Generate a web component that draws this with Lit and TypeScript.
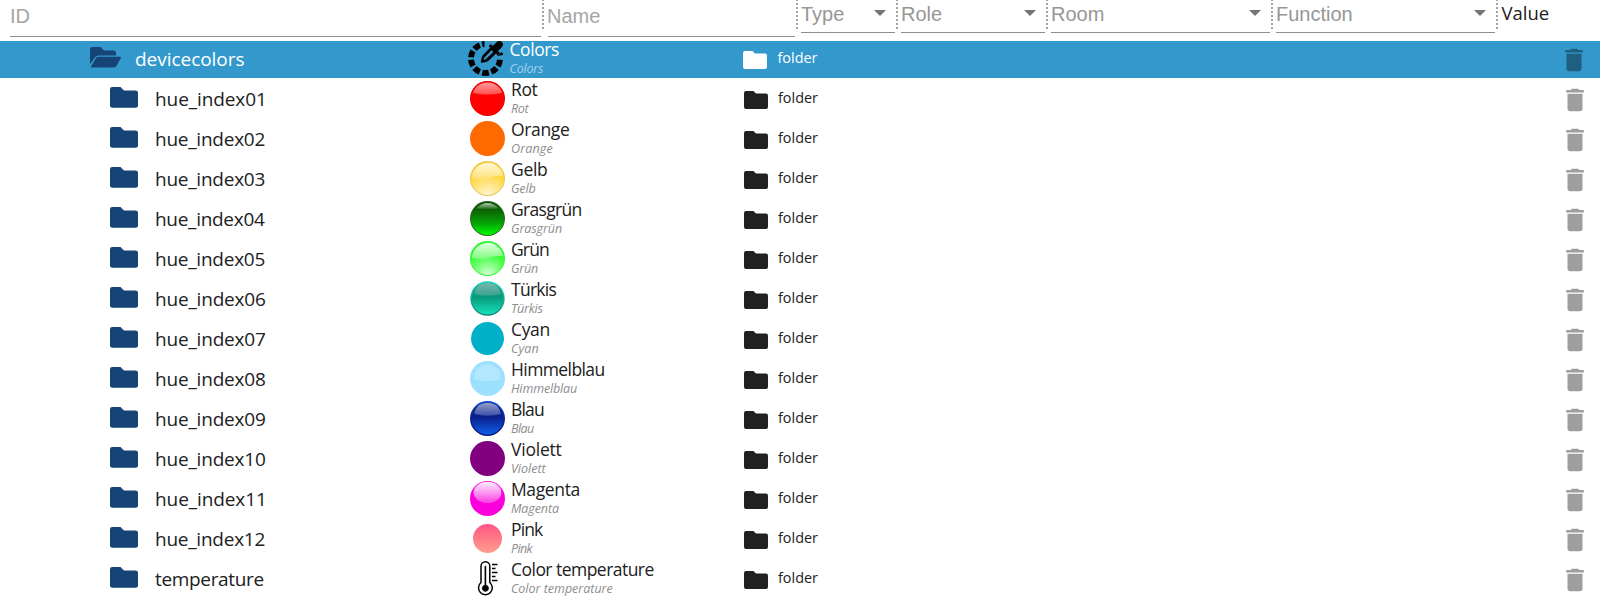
import { LitElement, html, css, svg } from "lit";
import { customElement } from "lit/decorators.js";
import { styleMap } from "lit/directives/style-map.js";
import { classMap } from "lit/directives/class-map.js";

interface Row {
  id: string;
  idWidth: number;
  name: string;
  nameWidth: number;
  subWidth: number;
  icon: string;
  open?: boolean;
}

const ROWS: Row[] = [
  { id: "devicecolors", idWidth: 108.5, name: "Colors", nameWidth: 48.5, subWidth: 34.5, icon: "picker", open: true },
  { id: "hue_index01", idWidth: 107, name: "Rot", nameWidth: 25.5, subWidth: 18.5, icon: "rot" },
  { id: "hue_index02", idWidth: 108.5, name: "Orange", nameWidth: 57, subWidth: 41.5, icon: "orange" },
  { id: "hue_index03", idWidth: 108.5, name: "Gelb", nameWidth: 35, subWidth: 24.5, icon: "gelb" },
  { id: "hue_index04", idWidth: 109, name: "Grasgrün", nameWidth: 69.5, subWidth: 51, icon: "gras" },
  { id: "hue_index05", idWidth: 108.5, name: "Grün", nameWidth: 37, subWidth: 27, icon: "gruen" },
  { id: "hue_index06", idWidth: 109, name: "Türkis", nameWidth: 45.5, subWidth: 31.5, icon: "tuerkis" },
  { id: "hue_index07", idWidth: 109, name: "Cyan", nameWidth: 37.5, subWidth: 27.5, icon: "cyan" },
  { id: "hue_index08", idWidth: 109, name: "Himmelblau", nameWidth: 92.5, subWidth: 66, icon: "himmel" },
  { id: "hue_index09", idWidth: 109, name: "Blau", nameWidth: 32, subWidth: 23, icon: "blau" },
  { id: "hue_index10", idWidth: 109, name: "Violett", nameWidth: 50.5, subWidth: 34.5, icon: "violett" },
  { id: "hue_index11", idWidth: 107, name: "Magenta", nameWidth: 67.5, subWidth: 48, icon: "magenta" },
  { id: "hue_index12", idWidth: 108.5, name: "Pink", nameWidth: 32, subWidth: 22.5, icon: "pink" },
  { id: "temperature", idWidth: 108.5, name: "Color temperature", nameWidth: 141.5, subWidth: 101.5, icon: "thermo" },
];

const pen = document.createElement("canvas").getContext("2d")!;

// Letter spacing that makes a label span the given width.
function tracking(text: string, font: string, width: number) {
  pen.font = font;
  const m = pen.measureText(text);
  const ink = m.actualBoundingBoxRight + m.actualBoundingBoxLeft;
  return { letterSpacing: `${((width - ink) / (text.length - 1)).toFixed(3)}px` };
}

const grad = (id: string, stops: [number, string][]) => svg`
  <linearGradient id=${id} x1="0" y1="0" x2="0" y2="1">
    ${stops.map(([o, c]) => svg`<stop offset=${o} stop-color=${c}></stop>`)}
  </linearGradient>`;

const disc = (fill: string, r = 17.5) => svg`<circle cx="17.5" cy="17.5" r=${r} fill=${fill}></circle>`;

const WAVE = "M2 17A15.6 15.6 0 0 1 33 15Q26 13.8 20 16.5T2 17Z";
const DOME = "M4.2 13C5.5 5 11 1.8 17.5 1.8S29.5 5 30.8 13Q17.5 16.5 4.2 13Z";

const ICONS: Record<string, unknown> = {
  picker: svg`
    ${[18, 54, 90, 126, 162, 198, 234].map(
      (a) => svg`<path transform="rotate(${a} 17.5 17.5)" d="M28.8 14.9L34.5 13.5A17.5 17.5 0 0 1 34.5 21.5L28.8 20.1A11.6 11.6 0 0 0 28.8 14.9Z"></path>`
    )}
    <path d="M13.5 .5Q15 0 16.5 0V6Q15.800 6 14.900 6.200ZM35 14V12.500L33.500 11L29 15Z"></path>
    <path d="M33.900 1.100C32.300-.5 29.900-.3 28.300 1.400L24.900 4.900L22.800 3L20.600 5.200L22.200 6.800L15 14Q13.600 15.400 13.500 17.200L12.800 21.800L17.400 21.200Q19.400 21 20.800 19.600L28 12.600L29.700 14.200L31.900 12L30 10L33.600 6.500C35.300 4.900 35.400 2.600 33.900 1.100ZM18.600 17.600Q17.400 18.700 15.500 19Q15.700 17.300 16.900 16L23.600 9.300L25.300 11Z"></path>`,
  rot: svg`
    ${grad("rotG", [[0, "#ff9b9b"], [1, "#ff5050"]])}
    ${disc("#e00000")}${disc("#ff0000", 16.8)}
    <path fill="url(#rotG)" d="M3 12C5 5 11 1.5 17.5 1.5S30 5 32 12Q17.5 15 3 12Z"></path>`,
  orange: disc("#ff6a00"),
  gelb: svg`
    <radialGradient id="gelbR" cx=".5" cy="1" r=".8"><stop offset="0" stop-color="#fff6cf"></stop><stop offset=".45" stop-color="#ffe587"></stop><stop offset="1" stop-color="#ffd21f"></stop></radialGradient>
    ${grad("gelbG", [[0, "#fff8dc"], [1, "#ffe278"]])}
    ${disc("#e6c65c")}${disc("url(#gelbR)", 16.6)}<path fill="url(#gelbG)" d=${WAVE}></path>`,
  gras: svg`
    ${grad("grasG", [[0, "#0c4a06"], [0.3, "#0b6a05"], [0.65, "#04a504"], [1, "#00f800"]])}
    ${grad("grasH", [[0, "#b5c8b3"], [1, "#176a10"]])}
    ${disc("#27681f")}${disc("url(#grasG)", 16.6)}
    <path fill="url(#grasH)" d="M6 7.5Q17.5-3.5 29 7.5Q17.5 9 6 7.5Z"></path>`,
  gruen: svg`
    <radialGradient id="gruenR" cx=".5" cy="1" r=".8"><stop offset="0" stop-color="#d8ffd8"></stop><stop offset=".45" stop-color="#7dff7d"></stop><stop offset="1" stop-color="#1dff1d"></stop></radialGradient>
    ${grad("gruenG", [[0, "#e2ffe2"], [1, "#80fb80"]])}
    ${disc("#38f038")}${disc("url(#gruenR)", 16.6)}<path fill="url(#gruenG)" d=${WAVE}></path>`,
  tuerkis: svg`
    ${grad("tkG", [[0, "#10a890"], [0.45, "#089a7c"], [1, "#18e0b8"]])}
    ${grad("tkE", [[0, "#10d8b8"], [1, "#128878"]])}
    ${grad("tkH", [[0, "#74b8ac"], [1, "#3aa28c"]])}
    ${disc("url(#tkE)", 17.2)}${disc("url(#tkG)", 15.8)}<path fill="url(#tkH)" d=${DOME}></path>`,
  cyan: disc("#00b0c8", 16.5),
  himmel: svg`${disc("#9be1ff")}
    <path fill="#b2e8ff" d="M4.2 18C3.5 9 9.5 3.6 17.5 3.6S31.5 9 30.8 18Q17.5 22.5 4.2 18Z"></path>`,
  blau: svg`
    ${grad("blG", [[0, "#0a1e80"], [0.45, "#0a1f8c"], [1, "#0f5ee8"]])}
    ${grad("blE", [[0, "#1050d8"], [0.5, "#0a2490"], [1, "#0a1c80"]])}
    ${grad("blH", [[0, "#939fc8"], [1, "#3c4fa6"]])}
    ${disc("url(#blE)")}${disc("url(#blG)", 16)}<path fill="url(#blH)" d=${DOME}></path>`,
  violett: disc("#800080"),
  magenta: svg`
    ${grad("mgG", [[0, "#fff0fe"], [1, "#f93fe2"]])}
    ${disc("#fa00dc")}<ellipse cx="17.5" cy="11.4" rx="13.9" ry="10.6" fill="url(#mgG)"></ellipse>`,
  pink: svg`${grad("pkG", [[0, "#ff5585"], [1, "#ff9e8c"]])}${disc("url(#pkG)", 14.5)}`,
  thermo: svg`
    <g fill="none" stroke="#000" stroke-width="1.5">
      <path d="M11 21.5V5.2a4.4 4.4 0 0 1 8.8 0V21.5a6.9 6.9 0 1 1-8.8 0Z"></path>
      <path d="M22 3.5h5.500M22 7.500h3.5M22 11.500h5.500M22 15.500h3.5M22 19.500h5.500"></path>
    </g>
    <path d="M14.8 24V5.500a.6.6 0 0 1 1.200 0V24a3.3 3.3 0 1 1-1.200 0Z" stroke="#000" stroke-width=".4"></path>`,
};

@customElement("app-root")
class AppRoot extends LitElement {
  static styles = css`
    :host { display: block; height: 601px; overflow: hidden; background: #fff; color: #212121; font-family: "Open Sans", "Noto Sans", sans-serif; }
    svg { display: block; }
    .head { display: flex; height: 41px; padding-left: 10px; font: 20px/24px "Liberation Sans", Arial, sans-serif; color: #969696; }
    .cell { box-sizing: border-box; border-bottom: 1px solid #8f8f8f; display: flex; justify-content: space-between; }
    .input { height: 37px; padding-top: 4px; color: #a5a5a5; }
    .select { height: 33px; padding: 2px 9px 0 0; }
    .arrow { width: 12px; height: 6px; margin-top: 8px; fill: #757575; }
    .dots { width: 2px; height: 29px; background: repeating-linear-gradient(to top, #a3a3a3 0 2px, transparent 2px 4px); }
    .w-id { width: 531px; margin-right: 1px; }
    .w-name { width: 247px; margin: 0 1px 0 4px; text-indent: -1px; }
    .w-type { width: 94px; margin: 0 1px 0 3px; }
    .w-role { width: 144px; margin: 0 1px 0 3px; }
    .w-room { width: 219px; margin: 0 1px 0 3px; }
    .w-func { width: 219px; margin: 0 1px 0 3px; }
    .value { padding-left: 3.5px; font: 18.5px/26px "Open Sans", "Noto Sans", sans-serif; color: #212121; }
    .list { display: flex; flex-direction: column; gap: 3px; }
    .row { display: grid; grid-template-columns: 110px 45px 315px 41px 232.5px 34.5px 1fr 40px; height: 37px; }
    .row.open { grid-template-columns: 90px 45px 333px 41.5px 233px 35px 1fr 40px; background: #3399cc; color: #fff; }
    .folder { fill: #164477; margin-top: 6px; }
    .id { font-size: 19px; line-height: 37px; white-space: pre; }
    .open .id { line-height: 36px; }
    .name { font-size: 17.5px; line-height: 17px; white-space: pre; }
    .sub { font-size: 12.5px; line-height: 18px; padding-top: 2px; font-style: italic; color: #8d8d8d; white-space: pre; }
    .open .sub { color: #a3d2ec; }
    .kind { fill: #212121; margin-top: 10px; }
    .open .kind { fill: #fff; }
    .type { font-size: 14.4px; line-height: 33px; }
    .trash { fill: #9e9e9e; margin-top: 4px; }
    .open .trash { fill: #1f5f80; margin-left: -1px; }
  `;

  select(label: string, width: string) {
    return html`<div class="cell select ${width}"><span>${label}</span>
      <svg class="arrow" viewBox="0 0 12 6"><path d="M0 0h12L6 6z"></path></svg></div><div class="dots"></div>`;
  }

  row(r: Row) {
    return html`<div class=${classMap({ row: true, open: !!r.open })}>
      ${r.open
        ? html`<span></span><svg class="folder" width="32" height="22" viewBox="0 0 32 22">
            <path d="M0 17V2.5A2.5 2.5 0 0 1 2.5 0H10.5L14 3.5H23.5A2.5 2.5 0 0 1 26 6V8.5H8.5A4 4 0 0 0 5 10.5Z"></path>
            <path d="M1 19.5L6 11A2.5 2.5 0 0 1 8 9.8H30.2Q31.5 9.8 30.9 11L26.2 19.3A2.5 2.5 0 0 1 24 20.6H1.8Q.4 20.6 1 19.5Z"></path></svg>`
        : html`<span></span><svg class="folder" width="28" height="21" viewBox="0 0 28 21">
            <path d="M2.3 0H10.5L14 3.4H25.7A2.3 2.3 0 0 1 28 5.7V18.5A2.3 2.3 0 0 1 25.7 20.8H2.3A2.3 2.3 0 0 1 0 18.5V2.3A2.3 2.3 0 0 1 2.3 0Z"></path></svg>`}
      <span class="id" style=${styleMap(tracking(r.id, "19px 'Open Sans'", r.idWidth))}>${r.id}</span>
      <svg width="35" height="35" viewBox="0 0 35 35">${ICONS[r.icon]}</svg>
      <div>
        <div class="name" style=${styleMap(tracking(r.name, "17.5px 'Open Sans'", r.nameWidth))}>${r.name}</div>
        <div class="sub" style=${styleMap(tracking(r.name, "italic 12.5px 'Open Sans'", r.subWidth))}>${r.name}</div>
      </div>
      <svg class="kind" width="24" height="18" viewBox="0 0 24 18">
        <path d="M2 0H9.5L12 2.6H22A2 2 0 0 1 24 4.6V16A2 2 0 0 1 22 18H2A2 2 0 0 1 0 16V2A2 2 0 0 1 2 0Z"></path></svg>
      <span class="type">folder</span>
      <svg class="trash" width="30" height="30" viewBox="0 0 24 24">
        <path d="M6 19c0 1.1.9 2 2 2h8c1.1 0 2-.9 2-2V7H6v12zM19 4h-3.5l-1-1h-5l-1 1H5v2h14V4z"></path></svg>
    </div>`;
  }

  render() {
    return html`
      <div class="head">
        <div class="cell input w-id">ID</div><div class="dots"></div>
        <div class="cell input w-name">Name</div><div class="dots"></div>
        ${this.select("Type", "w-type")}${this.select("Role", "w-role")}
        ${this.select("Room", "w-room")}${this.select("Function", "w-func")}
        <div class="value">Value</div>
      </div>
      <div class="list">${ROWS.map((r) => this.row(r))}</div>`;
  }
}
